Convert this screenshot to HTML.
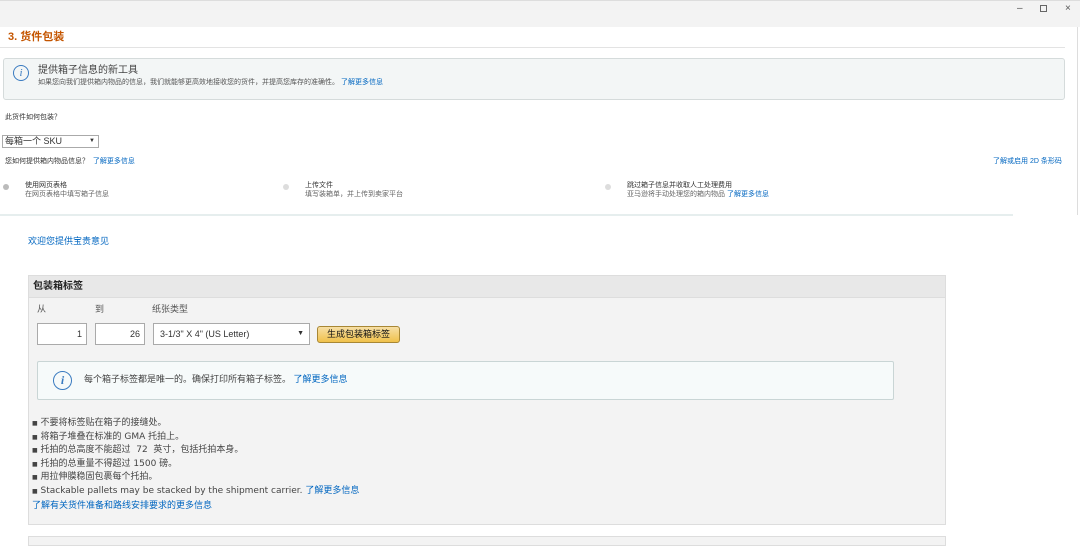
<!DOCTYPE html>
<html><head><meta charset="utf-8"><style>
*{margin:0;padding:0;box-sizing:border-box}
body{width:1080px;height:541px;overflow:hidden;background:#fff;font-family:"Liberation Sans","Noto Sans CJK SC",sans-serif;color:#333;position:relative}
.a{position:absolute;white-space:nowrap;line-height:1.2}
.l{color:#0066c0}
.s7{font-size:7px}
</style></head><body>
<div class="a" style="left:0;top:0;width:1080px;height:27px;background:#f3f3f3;border-top:1px solid #ddd"></div>
<div class="a" style="left:1017px;top:3px;font-size:10px;color:#555">–</div>
<div class="a" style="left:1040px;top:5px;width:7px;height:7px;border:1px solid #666"></div>
<div class="a" style="left:1065px;top:3px;font-size:10px;color:#555">×</div>
<div class="a" style="left:1077px;top:27px;width:1px;height:188px;background:#ddd"></div>
<div class="a" style="left:8px;top:31px;font-size:11px;font-weight:bold;color:#c45500">3. 货件包装</div>
<div class="a" style="left:0;top:47px;width:1065px;height:1px;background:#e3e3e3"></div>
<div class="a" style="left:3px;top:58px;width:1062px;height:42px;background:#f3f6f6;border:1px solid #d5dbdb;border-radius:3px"></div>
<div class="a" style="left:13px;top:65px;width:16px;height:16px;border:1px solid #3a7bc0;border-radius:50%;color:#3a7bc0;font-family:'Liberation Serif',serif;font-style:italic;font-size:11px;text-align:center;line-height:14px">i</div>
<div class="a" style="left:38px;top:65px;font-size:10px;color:#444">提供箱子信息的新工具</div>
<div class="a s7" style="left:38px;top:79px;color:#555">如果您向我们提供箱内物品的信息，我们就能够更高效地接收您的货件，并提高您库存的准确性。 <span class="l">了解更多信息</span></div>
<div class="a s7" style="left:5px;top:114px">此货件如何包装？</div>
<div class="a" style="left:2px;top:135px;width:97px;height:13px;border:1px solid #aaa;background:#fff;font-size:9px;line-height:11px;padding-left:2px">每箱一个 SKU<span style="position:absolute;right:3px;font-size:6px">▼</span></div>
<div class="a s7" style="left:5px;top:158px">您如何提供箱内物品信息？ &nbsp;<span class="l">了解更多信息</span></div>
<div class="a s7 l" style="left:993px;top:158px">了解或启用 2D 条形码</div>
<div class="a" style="left:3px;top:184px;width:6px;height:6px;border-radius:50%;background:#bbb"></div>
<div class="a" style="left:283px;top:184px;width:6px;height:6px;border-radius:50%;background:#ddd"></div>
<div class="a" style="left:605px;top:184px;width:6px;height:6px;border-radius:50%;background:#ddd"></div>
<div class="a s7" style="left:25px;top:181px;line-height:9px">使用网页表格<br><span style="color:#666">在网页表格中填写箱子信息</span></div>
<div class="a s7" style="left:305px;top:181px;line-height:9px">上传文件<br><span style="color:#666">填写装箱单，并上传到卖家平台</span></div>
<div class="a s7" style="left:627px;top:181px;line-height:9px">跳过箱子信息并收取人工处理费用<br><span style="color:#666">亚马逊将手动处理您的箱内物品 <span class="l">了解更多信息</span></span></div>
<div class="a" style="left:0;top:214px;width:1013px;height:2px;background:#e6eeee"></div>
<div class="a l" style="left:28px;top:236px;font-size:9px">欢迎您提供宝贵意见</div>
<div class="a" style="left:28px;top:275px;width:918px;height:250px;background:#f3f3f3;border:1px solid #ddd"></div>
<div class="a" style="left:29px;top:276px;width:916px;height:22px;background:#e8e8e8;border-bottom:1px solid #ddd"></div>
<div class="a" style="left:33px;top:281px;font-size:10px;font-weight:bold;color:#222">包装箱标签</div>
<div class="a" style="left:37px;top:304px;font-size:9px;color:#555">从</div>
<div class="a" style="left:95px;top:304px;font-size:9px;color:#555">到</div>
<div class="a" style="left:152px;top:304px;font-size:9px;color:#555">纸张类型</div>
<div class="a" style="left:37px;top:323px;width:50px;height:22px;border:1px solid #aaa;background:#fff;font-size:9px;text-align:right;padding-right:4px;line-height:20px">1</div>
<div class="a" style="left:95px;top:323px;width:50px;height:22px;border:1px solid #aaa;background:#fff;font-size:9px;text-align:right;padding-right:4px;line-height:20px">26</div>
<div class="a" style="left:153px;top:323px;width:157px;height:22px;border:1px solid #aaa;background:#fff;font-size:9px;line-height:20px;padding-left:6px">3-1/3" X 4" (US Letter)<span style="position:absolute;right:5px;font-size:7px">▼</span></div>
<div class="a" style="left:317px;top:326px;width:83px;height:17px;border:1px solid #a88734;border-radius:3px;background:linear-gradient(#f7dfa5,#f0c14b);font-size:9px;text-align:center;line-height:15px;color:#111">生成包装箱标签</div>
<div class="a" style="left:37px;top:361px;width:857px;height:39px;background:#f6fafa;border:1px solid #c9d5d5;border-radius:2px"></div>
<div class="a" style="left:53px;top:371px;width:19px;height:19px;border:1px solid #3a7bc0;border-radius:50%;color:#3a7bc0;font-family:'Liberation Serif',serif;font-style:italic;font-weight:bold;font-size:12px;text-align:center;line-height:17px">i</div>
<div class="a" style="left:84px;top:374px;font-size:9px;color:#444">每个箱子标签都是唯一的。确保打印所有箱子标签。 <span class="l">了解更多信息</span></div>
<div class="a" style="left:32px;top:417px;font-size:9px;line-height:12.6px;color:#444;font-family:'DejaVu Sans','Noto Sans CJK SC',sans-serif">
<span style="font-size:6px">■</span> 不要将标签贴在箱子的接缝处。<br><span style="font-size:6px">■</span> 将箱子堆叠在标准的 GMA 托拍上。<br><span style="font-size:6px">■</span> 托拍的总高度不能超过 &nbsp;72 &nbsp;英寸，包括托拍本身。<br><span style="font-size:6px">■</span> 托拍的总重量不得超过 1500 磅。<br><span style="font-size:6px">■</span> 用拉伸膜稳固包裹每个托拍。<br><span style="font-size:6px">■</span> Stackable pallets may be stacked by the shipment carrier. <span class="l">了解更多信息</span></div>
<div class="a l" style="left:32px;top:500px;font-size:9px">了解有关货件准备和路线安排要求的更多信息</div>
<div class="a" style="left:28px;top:536px;width:918px;height:10px;background:#f3f3f3;border:1px solid #ddd"></div>
</body></html>
